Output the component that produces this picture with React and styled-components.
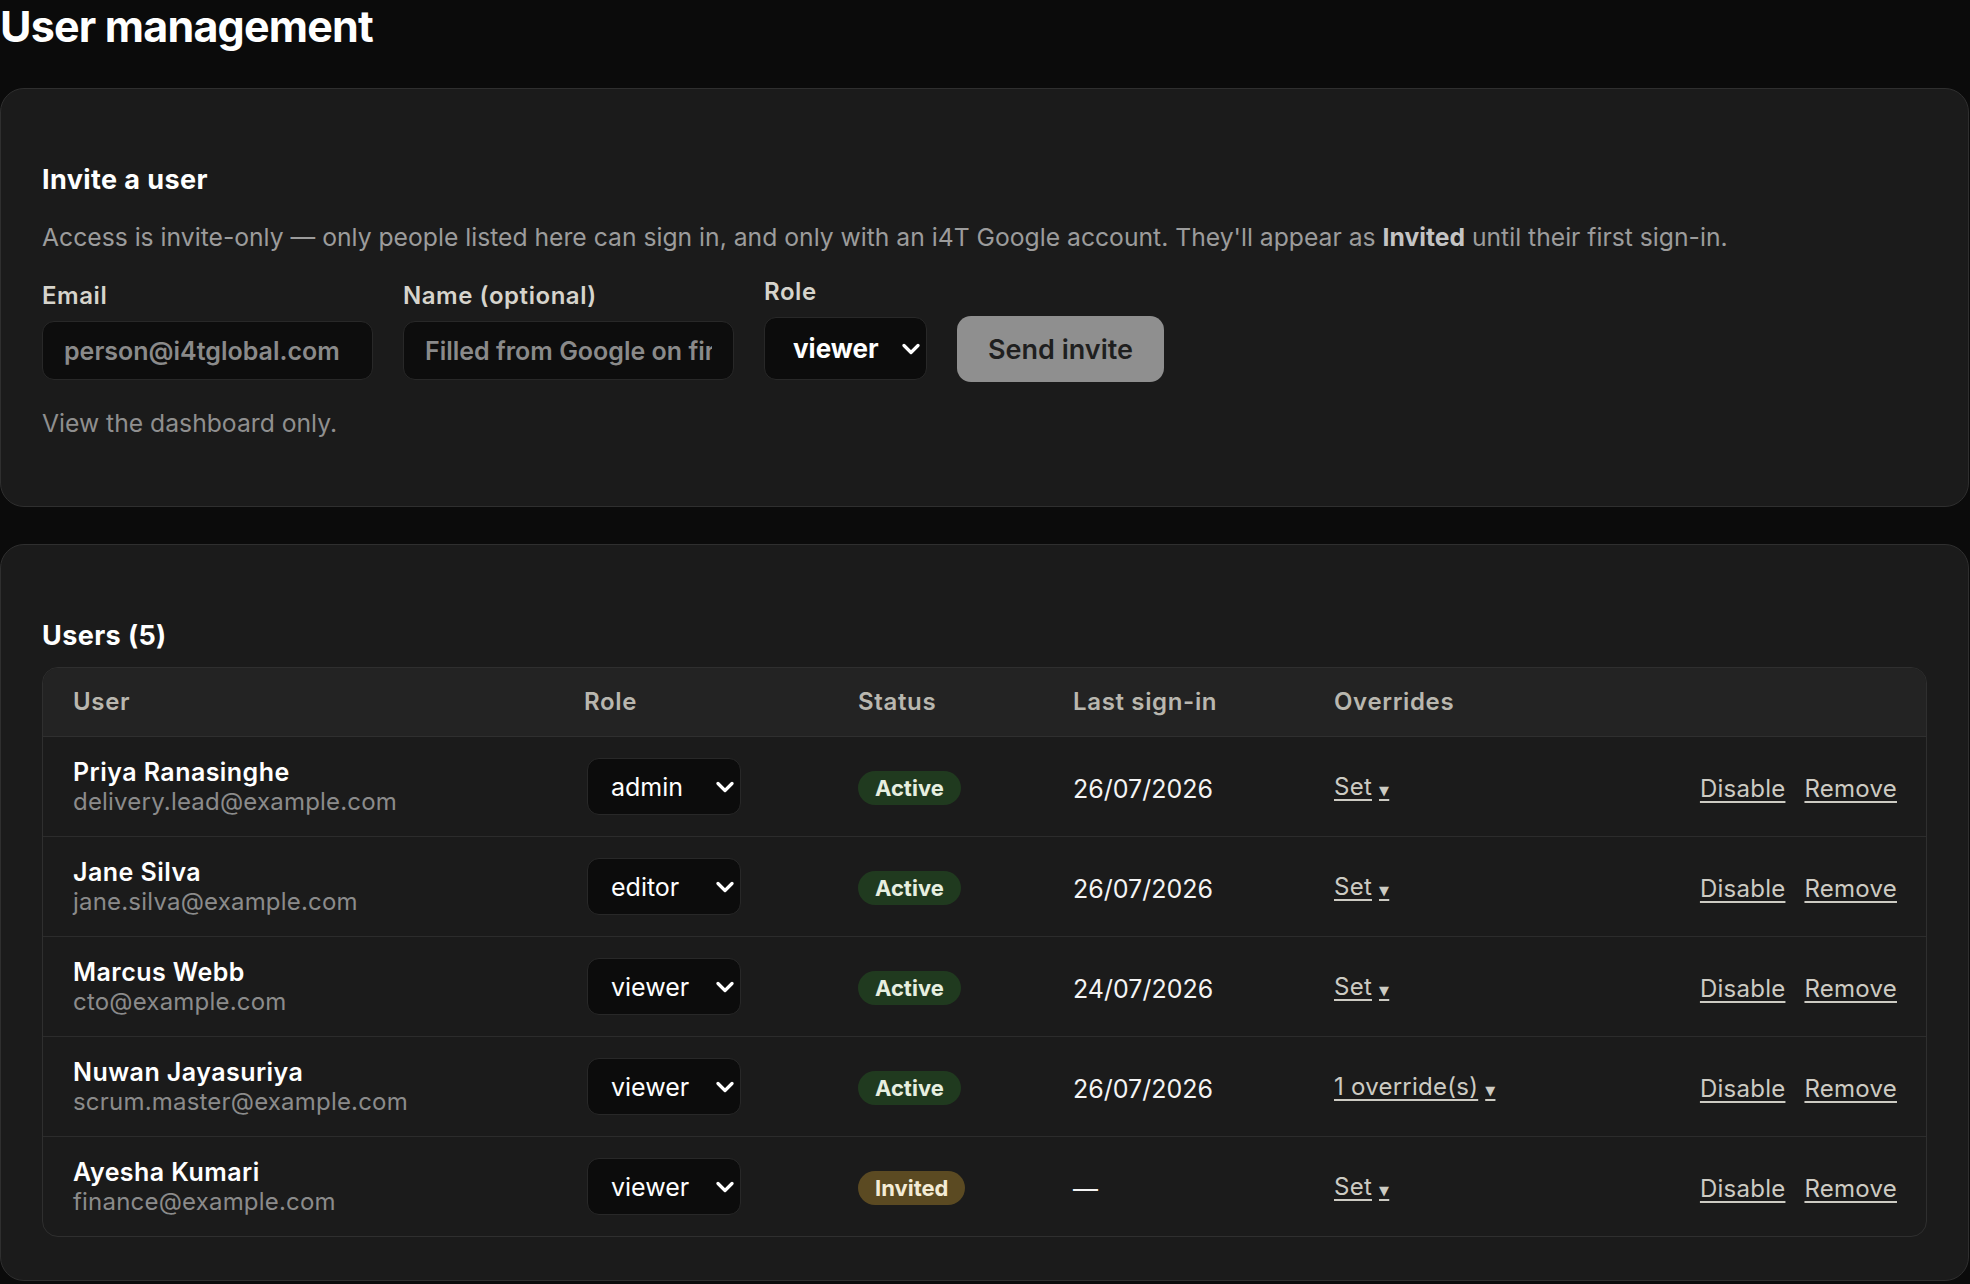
import React from "react";
import styled, { createGlobalStyle } from "styled-components";

const Global = createGlobalStyle`
  html, body { margin: 0; padding: 0; background: #0b0b0b; }
  body { font-family: Inter, "Noto Sans", "DejaVu Sans", sans-serif; color: #f2f2f2; }
  * { box-sizing: border-box; }
`;

const Page = styled.div`
  width: 1969px;
`;

const Title = styled.h1`
  margin: 0;
  font-size: 43px;
  line-height: 52px;
  font-weight: 700;
  letter-spacing: -0.8px;
  color: #ffffff;
`;

const Card = styled.section`
  margin-top: ${(p) => p.$mt}px;
  background: #1b1b1b;
  border: 1px solid #2f2f2f;
  border-radius: 24px;
  padding: 75px 41px ${(p) => p.$pb}px 41px;
`;

const SectionTitle = styled.h2`
  margin: 0;
  font-size: 27px;
  line-height: 32px;
  font-weight: 700;
  letter-spacing: 0.4px;
  color: #ffffff;
`;

const Desc = styled.p`
  margin: 25px 0 0;
  font-size: 24.7px;
  line-height: 32px;
  color: #9c9c9c;
  b { font-weight: 700; color: #c4c4c4; }
`;

const FormRow = styled.div`
  display: flex;
  align-items: flex-end;
  gap: 30px;
  margin-top: 24px;
`;

const Field = styled.label`
  display: flex;
  flex-direction: column;
  gap: 10px;
`;

const FieldLabel = styled.span`
  font-size: 24px;
  line-height: 30px;
  font-weight: 600;
  letter-spacing: 0.55px;
  color: #d6d4cc;
`;

const TextInput = styled.input`
  width: 331px;
  height: 59px;
  padding: 0 21px;
  background: #0d0d0d;
  border: 1px solid #282828;
  border-radius: 12px;
  font-family: inherit;
  font-size: 25px;
  font-weight: 600;
  color: #e6e6e6;
  outline: none;
  &::placeholder { color: #8a8a8a; opacity: 1; }
`;

const SelectWrap = styled.div`
  position: relative;
  width: ${(p) => p.$w}px;
  height: ${(p) => p.$h}px;
  margin-left: ${(p) => p.$ml || 0}px;
`;

const Select = styled.select`
  appearance: none;
  -webkit-appearance: none;
  width: 100%;
  height: 100%;
  padding: 0 0 0 ${(p) => p.$pl}px;
  background: #0c0c0c;
  border: 1px solid #282828;
  border-radius: 12px;
  font-family: inherit;
  font-size: ${(p) => p.$fs}px;
  font-weight: ${(p) => p.$fw};
  color: #ffffff;
  outline: none;
`;

const Chevron = styled.svg`
  position: absolute;
  right: 7px;
  top: 50%;
  width: 18px;
  height: 12px;
  transform: translateY(-50%);
  pointer-events: none;
`;

const SendButton = styled.button`
  width: 207px;
  height: 66px;
  margin-bottom: -2px;
  background: #8f8f8f;
  border: none;
  border-radius: 14px;
  font-family: inherit;
  font-size: 27px;
  font-weight: 600;
  color: #1f1f1f;
`;

const Helper = styled.p`
  margin: 27px 0 0;
  font-size: 24.7px;
  line-height: 32px;
  color: #8f8f8f;
`;

const Table = styled.div`
  margin-top: 15px;
  border: 1px solid #2f2f2f;
  border-radius: 16px;
  overflow: hidden;
`;

const cols = "511px 274px 215px 261px 1fr auto";

const HeadRow = styled.div`
  display: grid;
  grid-template-columns: ${cols};
  align-items: center;
  height: 69px;
  padding: 0 29px 0 30px;
  background: #232323;
  border-bottom: 1px solid #2f2f2f;
`;

const HeadCell = styled.div`
  font-size: 24px;
  line-height: 30px;
  font-weight: 600;
  letter-spacing: 0.65px;
  color: #b9b7af;
`;

const Row = styled.div`
  display: grid;
  grid-template-columns: ${cols};
  align-items: center;
  height: 100px;
  padding: 0 29px 0 30px;
  border-bottom: 1px solid #2c2c2c;
  &:last-child { height: 99px; border-bottom: none; }
`;

const UserCell = styled.div`
  display: flex;
  flex-direction: column;
`;

const UserName = styled.span`
  font-size: 25px;
  line-height: 30px;
  font-weight: 600;
  letter-spacing: 0.45px;
  color: #ffffff;
`;

const UserEmail = styled.span`
  font-size: 24px;
  line-height: 30px;
  letter-spacing: 0.2px;
  color: #8b8b8b;
`;

const Badge = styled.span`
  justify-self: start;
  display: inline-flex;
  align-items: center;
  height: 34px;
  margin-top: 3px;
  padding: 0 17px;
  border-radius: 17px;
  font-size: 22px;
  font-weight: 700;
  background: ${(p) => (p.$kind === "invited" ? "#5b4a22" : "#203a1f")};
  color: ${(p) => (p.$kind === "invited" ? "#f4ecd6" : "#e7efe0")};
`;

const DateText = styled.span`
  font-size: 25px;
  line-height: 30px;
  margin-top: 4px;
  color: #f4f4f4;
`;

const LinkText = styled.a`
  justify-self: start;
  margin-top: 4px;
  font-size: 24px;
  line-height: 30px;
  letter-spacing: 0.25px;
  color: #cdcbc3;
  text-decoration: underline;
  text-underline-offset: 4px;
  text-decoration-thickness: 1.5px;
  cursor: pointer;
`;

const Caret = styled.span`
  font-family: "DejaVu Sans", sans-serif;
  font-size: 13px;
  margin-left: 7px;
`;

const Actions = styled.div`
  display: flex;
  gap: 19px;
`;

const ChevronIcon = () => (
  <Chevron viewBox="0 0 18 12">
    <polyline points="2,2.5 9,9.5 16,2.5" fill="none" stroke="#ffffff" strokeWidth="3.2" strokeLinecap="round" strokeLinejoin="round" />
  </Chevron>
);

const users = [
  { name: "Priya Ranasinghe", email: "delivery.lead@example.com", role: "admin", status: "Active", last: "26/07/2026", ov: "Set" },
  { name: "Jane Silva", email: "jane.silva@example.com", role: "editor", status: "Active", last: "26/07/2026", ov: "Set" },
  { name: "Marcus Webb", email: "cto@example.com", role: "viewer", status: "Active", last: "24/07/2026", ov: "Set" },
  { name: "Nuwan Jayasuriya", email: "scrum.master@example.com", role: "viewer", status: "Active", last: "26/07/2026", ov: "1 override(s)" },
  { name: "Ayesha Kumari", email: "finance@example.com", role: "viewer", status: "Invited", last: "—", ov: "Set" },
];

export default function App() {
  return (
    <Page>
      <Global />
      <Title>User management</Title>

      <Card $mt={36} $pb={67}>
        <SectionTitle>Invite a user</SectionTitle>
        <Desc>
          Access is invite-only — only people listed here can sign in, and only with an i4T Google account. They'll appear as <b>Invited</b> until their first sign-in.
        </Desc>
        <FormRow>
          <Field>
            <FieldLabel>Email</FieldLabel>
            <TextInput placeholder="person@i4tglobal.com" />
          </Field>
          <Field>
            <FieldLabel>Name (optional)</FieldLabel>
            <TextInput placeholder="Filled from Google on first sign-in" />
          </Field>
          <Field>
            <FieldLabel>Role</FieldLabel>
            <SelectWrap $w={163} $h={63}>
              <Select defaultValue="viewer" $pl={28} $fs={26} $fw={700}>
                <option value="viewer">viewer</option>
                <option value="editor">editor</option>
                <option value="admin">admin</option>
              </Select>
              <ChevronIcon />
            </SelectWrap>
          </Field>
          <SendButton>Send invite</SendButton>
        </FormRow>
        <Helper>View the dashboard only.</Helper>
      </Card>

      <Card $mt={37} $pb={43}>
        <SectionTitle>Users (5)</SectionTitle>
        <Table>
          <HeadRow>
            <HeadCell>User</HeadCell>
            <HeadCell>Role</HeadCell>
            <HeadCell>Status</HeadCell>
            <HeadCell>Last sign-in</HeadCell>
            <HeadCell>Overrides</HeadCell>
            <HeadCell />
          </HeadRow>
          {users.map((u) => (
            <Row key={u.email}>
              <UserCell>
                <UserName>{u.name}</UserName>
                <UserEmail>{u.email}</UserEmail>
              </UserCell>
              <SelectWrap $w={154} $h={57} $ml={3}>
                <Select defaultValue={u.role} $pl={23} $fs={25} $fw={400}>
                  <option value="viewer">viewer</option>
                  <option value="editor">editor</option>
                  <option value="admin">admin</option>
                </Select>
                <ChevronIcon />
              </SelectWrap>
              <Badge $kind={u.status === "Invited" ? "invited" : "active"}>{u.status}</Badge>
              <DateText>{u.last}</DateText>
              <LinkText>
                {u.ov}
                <Caret>▼</Caret>
              </LinkText>
              <Actions>
                <LinkText>Disable</LinkText>
                <LinkText>Remove</LinkText>
              </Actions>
            </Row>
          ))}
        </Table>
      </Card>
    </Page>
  );
}
